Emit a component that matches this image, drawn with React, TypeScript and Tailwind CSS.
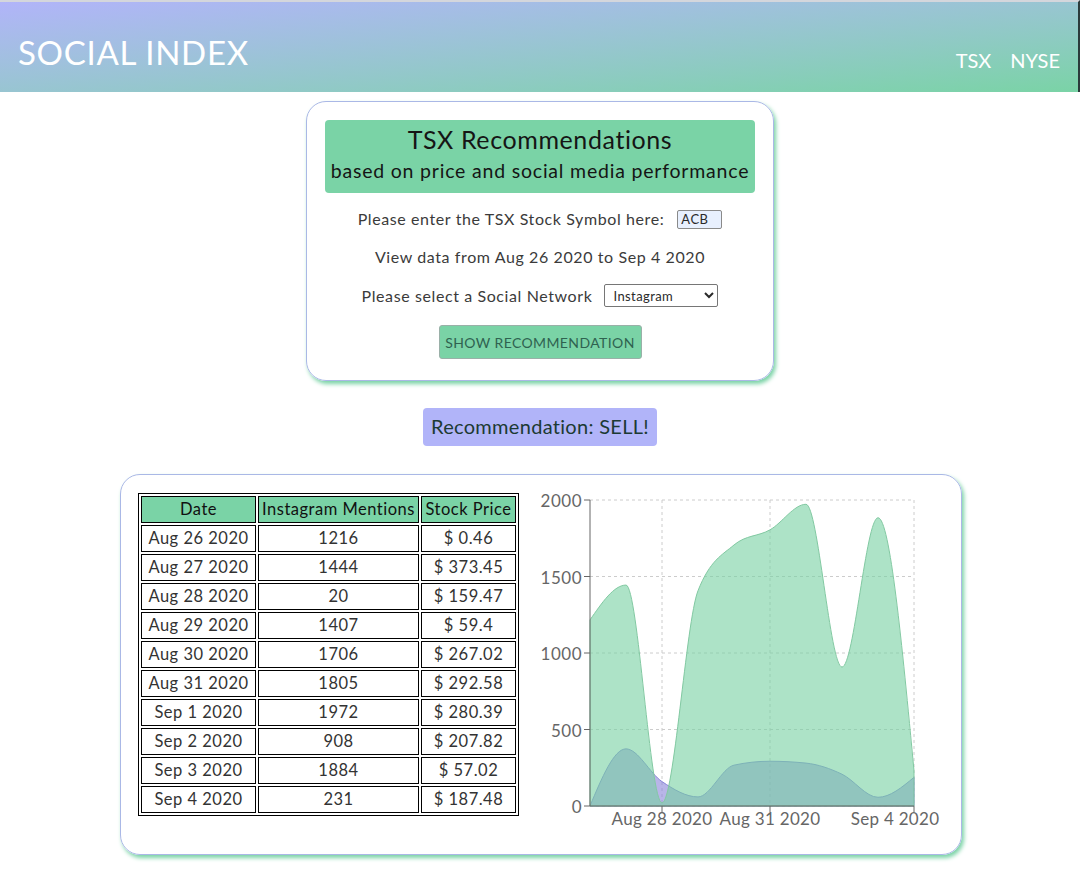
import React from "react";

const dates = ["Aug 26 2020","Aug 27 2020","Aug 28 2020","Aug 29 2020","Aug 30 2020","Aug 31 2020","Sep 1 2020","Sep 2 2020","Sep 3 2020","Sep 4 2020"];
const mentions = [1216,1444,20,1407,1706,1805,1972,908,1884,231];
const prices = [0.46,373.45,159.47,59.4,267.02,292.58,280.39,207.82,57.02,187.48];

const X0 = 61, X1 = 385, Y0 = 319, YT = 13;
const sx = (i: number) => X0 + (i * (X1 - X0)) / 9;
const sy = (v: number) => Y0 - (v * (Y0 - YT)) / 2000;

function monotone(pts: [number, number][]) {
  const n = pts.length;
  const sign = (v: number) => (v < 0 ? -1 : 1);
  const t: number[] = new Array(n).fill(0);
  for (let i = 1; i < n - 1; i++) {
    const [x0, y0] = pts[i - 1], [x1, y1] = pts[i], [x2, y2] = pts[i + 1];
    const h0 = x1 - x0, h1 = x2 - x1;
    const s0 = (y1 - y0) / h0, s1 = (y2 - y1) / h1;
    const p = (s0 * h1 + s1 * h0) / (h0 + h1);
    t[i] = (sign(s0) + sign(s1)) * Math.min(Math.abs(s0), Math.abs(s1), 0.5 * Math.abs(p)) || 0;
  }
  const h = pts[1][0] - pts[0][0];
  t[0] = (3 * (pts[1][1] - pts[0][1]) / h - t[1]) / 2;
  const hl = pts[n - 1][0] - pts[n - 2][0];
  t[n - 1] = (3 * (pts[n - 1][1] - pts[n - 2][1]) / hl - t[n - 2]) / 2;
  let d = `M${pts[0][0]},${pts[0][1]}`;
  for (let i = 0; i < n - 1; i++) {
    const [x0, y0] = pts[i], [x1, y1] = pts[i + 1];
    const dx = (x1 - x0) / 3;
    d += ` C${x0 + dx},${y0 + dx * t[i]} ${x1 - dx},${y1 - dx * t[i + 1]} ${x1},${y1}`;
  }
  return d;
}

function Chart() {
  const mp = mentions.map((v, i) => [sx(i), sy(v)] as [number, number]);
  const pp = prices.map((v, i) => [sx(i), sy(v)] as [number, number]);
  const ml = monotone(mp);
  const pl = monotone(pp);
  const close = ` L${X1},${Y0} L${X0},${Y0} Z`;
  const yTicks = [0, 500, 1000, 1500, 2000];
  const xTicks = [{ i: 2, label: "Aug 28 2020", x: sx(2) }, { i: 5, label: "Aug 31 2020", x: sx(5) }, { i: 9, label: "Sep 4 2020", x: sx(9) - 19 }];
  return (
    <svg width="420" height="345" viewBox="0 0 420 345" className="block" style={{ fontFamily: "Lato, sans-serif" }}>
      {yTicks.map((v) => (
        <line key={v} x1={X0} x2={X1} y1={sy(v)} y2={sy(v)} stroke="#ccc" strokeDasharray="3 3" />
      ))}
      {[2, 5, 9].map((i) => (
        <line key={i} x1={sx(i)} x2={sx(i)} y1={YT} y2={Y0} stroke="#ccc" strokeDasharray="3 3" />
      ))}
      <path d={pl + close} fill="#8884d8" fillOpacity={0.6} stroke="#8884d8" strokeWidth={1} />
      <path d={ml + close} fill="#76d0a2" fillOpacity={0.6} stroke="#82c9a2" strokeWidth={1} />
      <line x1={X0} x2={X0} y1={YT} y2={Y0} stroke="#666" />
      <line x1={X0} x2={X1} y1={Y0} y2={Y0} stroke="#666" />
      {yTicks.map((v) => (
        <g key={v}>
          <line x1={X0 - 6} x2={X0} y1={sy(v)} y2={sy(v)} stroke="#666" />
          <text x={X0 - 8} y={sy(v) + 7} textAnchor="end" fill="#666" fontSize="17" letterSpacing="0.5">{v}</text>
        </g>
      ))}
      {xTicks.map((t) => (
        <g key={t.i}>
          <line x1={sx(t.i)} x2={sx(t.i)} y1={Y0} y2={Y0 + 6} stroke="#666" />
          <text x={t.x} y={Y0 + 19} textAnchor="middle" fill="#666" fontSize="17" letterSpacing="0.3">{t.label}</text>
        </g>
      ))}
    </svg>
  );
}

export default function App() {
  const font = { fontFamily: "Lato, 'Noto Sans', sans-serif" };
  const th = "border border-black bg-[#7ad3a6] font-normal text-[#111] p-0 pb-[2px] leading-[20px]";
  const td = "border border-black text-center p-0 pb-[2px] leading-[20px]";
  return (
    <div className="min-h-[889px] bg-white" style={font}>
      <header className="h-[92px] border-t-2 border-t-[#d4d6dc] border-r-2 border-r-[#2b3b3b] bg-linear-to-br from-[#b1b4f9] to-[#7ad3a6] flex items-start justify-between px-[18px]">
        <div className="pt-[30px] text-white text-[33px] leading-[40px] tracking-[0.7px]">SOCIAL INDEX</div>
        <nav className="pt-[45px] flex gap-[19px] text-white text-[20px] leading-[26px] pr-0">
          <span>TSX</span>
          <span>NYSE</span>
        </nav>
      </header>

      <div className="flex flex-col items-center">
        <section className="mt-[9px] w-[468px] h-[280px] rounded-[20px] border border-[#aab8e6] shadow-[2px_3px_4px_#7ad3a6] px-[18px] pt-[18px] flex flex-col items-center text-[#3b3b3b]">
          <div className="w-full h-[73px] rounded-[4px] bg-[#7ad3a6] flex flex-col items-center pt-[3px] text-[#151515]">
            <div className="text-[25px] leading-[32px] tracking-[0.6px]">TSX Recommendations</div>
            <div className="text-[19.5px] leading-[32px] tracking-[0.8px]">based on price and social media performance</div>
          </div>
          <div className="mt-[16px] flex items-center gap-[13px] text-[16px] leading-[20px] tracking-[0.6px]">
            <span>Please enter the TSX Stock Symbol here:</span>
            <input readOnly value="ACB" className="w-[45px] h-[19px] bg-[#e8f0fe] border border-[#8a8a8a] rounded-[2px] px-[3px] text-[13px] text-[#2a2a2a] tracking-[0.5px]" />
          </div>
          <div className="mt-[18px] text-[16px] leading-[20px] tracking-[0.6px]">View data from Aug 26 2020 to Sep 4 2020</div>
          <div className="mt-[17px] flex items-center gap-[12px] text-[16px] leading-[20px] tracking-[0.6px]">
            <span>Please select a Social Network</span>
            <select defaultValue="Instagram" className="w-[114px] h-[23px] border border-[#767676] rounded-[2px] bg-white text-[13px] text-[#2a2a2a] pl-[4px] tracking-[0.4px]">
              <option>Instagram</option>
              <option>Twitter</option>
              <option>Reddit</option>
            </select>
          </div>
          <button className="mt-[18px] w-[203px] h-[34px] bg-[#7ad3a6] border border-[#9ab0a8] rounded-[3px] text-[14px] text-[#2f6250] tracking-[0.4px]">SHOW RECOMMENDATION</button>
        </section>

        <div className="mt-[27px] w-[234px] h-[38px] rounded-[4px] bg-[#b1b4f9] flex items-center justify-center pb-[2px] text-[20px] text-[#1c3a33] tracking-[0.3px]">Recommendation: SELL!</div>

        <section className="mt-[28px] ml-[2px] w-[842px] h-[381px] rounded-[20px] border border-[#aab8e6] shadow-[2px_3px_4px_#7ad3a6] flex items-start pl-[17px] pt-[18px]">
          <table className="border-separate border-spacing-[2px] border border-black text-[16.5px] text-[#333] tracking-[0.5px]">
            <thead>
              <tr className="h-[27px]">
                <th className={`w-[115px] ${th}`}>Date</th>
                <th className={`w-[161px] ${th}`}>Instagram Mentions</th>
                <th className={`w-[95px] ${th}`}>Stock Price</th>
              </tr>
            </thead>
            <tbody>
              {dates.map((d, i) => (
                <tr key={d} className="h-[27px]">
                  <td className={td}>{d}</td>
                  <td className={td}>{mentions[i]}</td>
                  <td className={td}>$ {prices[i]}</td>
                </tr>
              ))}
            </tbody>
          </table>
          <div className="ml-[10px] -mt-[6px]">
            <Chart />
          </div>
        </section>
      </div>
    </div>
  );
}
